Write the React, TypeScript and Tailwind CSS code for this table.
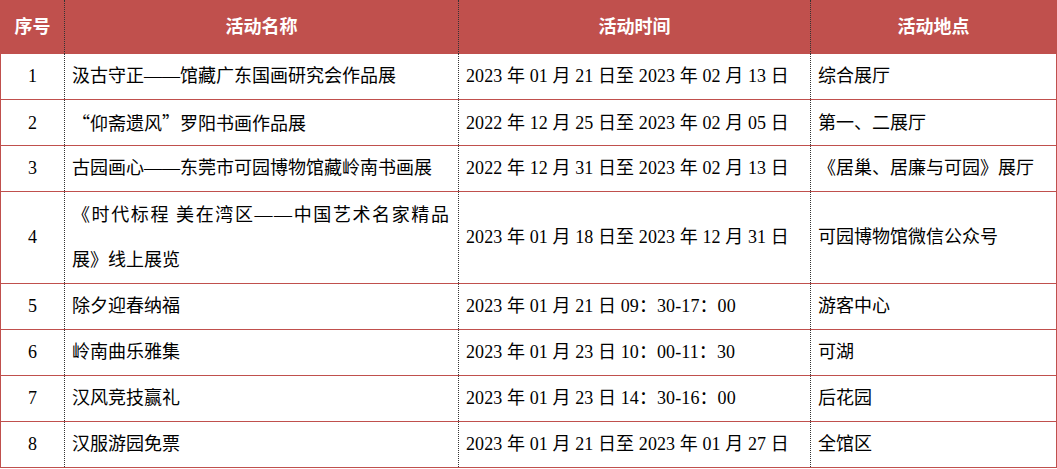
import React from 'react';

type Row = {
  no: string;
  name: React.ReactNode;
  time: string;
  place: string;
  tall?: boolean;
};

const cjk = "font-['Noto_Sans_CJK_SC',sans-serif]";

const rows: Row[] = [
  { no: '1', name: '汲古守正——馆藏广东国画研究会作品展', time: '2023 年 01 月 21 日至 2023 年 02 月 13 日', place: '综合展厅' },
  {
    no: '2',
    name: (
      <span>
        <span className={cjk}>“</span>仰斋遗风<span className={cjk}>”</span>罗阳书画作品展
      </span>
    ),
    time: '2022 年 12 月 25 日至 2023 年 02 月 05 日',
    place: '第一、二展厅',
  },
  { no: '3', name: '古园画心——东莞市可园博物馆藏岭南书画展', time: '2022 年 12 月 31 日至 2023 年 02 月 13 日', place: '《居巢、居廉与可园》展厅' },
  {
    no: '4',
    name: (
      <>
        <span className="block whitespace-nowrap tracking-[1.6px]">《时代标程 美在湾区——中国艺术名家精品</span>
        <span className="block whitespace-nowrap">展》线上展览</span>
      </>
    ),
    time: '2023 年 01 月 18 日至 2023 年 12 月 31 日',
    place: '可园博物馆微信公众号',
    tall: true,
  },
  { no: '5', name: '除夕迎春纳福', time: '2023 年 01 月 21 日 09：30-17：00', place: '游客中心' },
  { no: '6', name: '岭南曲乐雅集', time: '2023 年 01 月 23 日 10：00-11：30', place: '可湖' },
  { no: '7', name: '汉风竞技赢礼', time: '2023 年 01 月 23 日 14：30-16：00', place: '后花园' },
  { no: '8', name: '汉服游园免票', time: '2023 年 01 月 21 日至 2023 年 01 月 27 日', place: '全馆区' },
];

const grid = 'grid grid-cols-[63px_394px_352px_246px]';

export default function App() {
  return (
    <div className="min-h-screen bg-white font-['Liberation_Serif','Noto_Sans_CJK_SC',serif] text-[18px] text-black">
      <div className="w-[1057px] border-x border-[#c0504d]">
        {/* Header */}
        <div className={`${grid} h-[54px] bg-[#c0504d] font-bold text-white`}>
          <div className="flex items-center justify-center">序号</div>
          <div className="flex items-center justify-center border-l border-dotted border-[#333]">活动名称</div>
          <div className="flex items-center justify-center border-l border-dotted border-[#333]">活动时间</div>
          <div className="flex items-center justify-center border-l border-dotted border-[#333]">活动地点</div>
        </div>

        {/* Rows */}
        {rows.map((r) => (
          <div
            key={r.no}
            className={`${grid} ${r.tall ? 'h-[92px]' : 'h-[46px]'} border-b border-[#c0504d]`}
          >
            <div className="flex items-center justify-center">{r.no}</div>
            <div className="flex flex-col justify-center border-l border-dotted border-[#333] pl-[7px] leading-[45px] whitespace-nowrap">
              {r.name}
            </div>
            <div className="flex items-center border-l border-dotted border-[#333] pl-[7px] whitespace-nowrap tracking-[0.1px]">
              {r.time}
            </div>
            <div className="flex items-center border-l border-dotted border-[#333] pl-[7px] whitespace-nowrap">
              {r.place}
            </div>
          </div>
        ))}
      </div>
    </div>
  );
}
